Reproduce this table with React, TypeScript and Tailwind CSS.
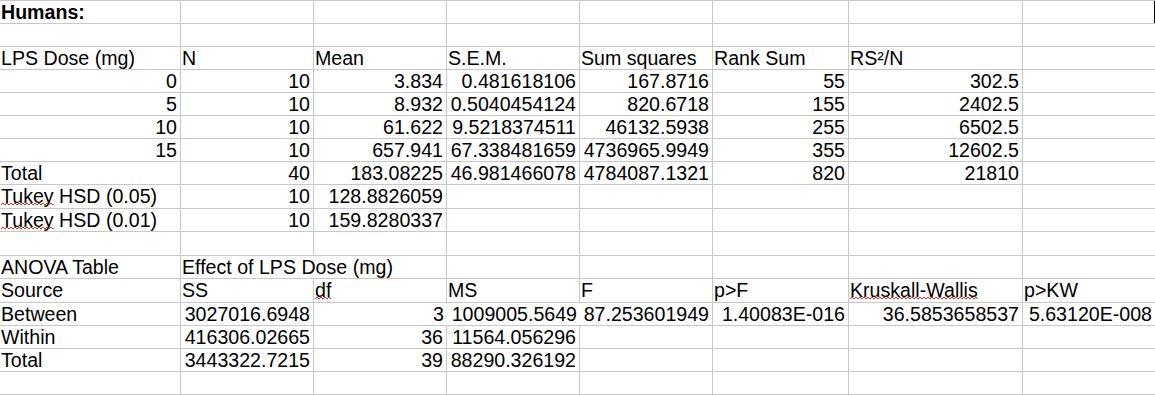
type Cell =
	| string
	| {
			t: string
			bold?: boolean
			squiggle?: boolean
			overflow?: boolean
			noRight?: boolean
	  }

const rows: { h: 23 | 24; cells: Cell[] }[] = [
	{ h: 23, cells: [{ t: 'Humans:', bold: true }, '', '', '', '', '', '', ''] },
	{ h: 23, cells: ['', '', '', '', '', '', '', ''] },
	{
		h: 23,
		cells: ['LPS Dose (mg)', 'N', 'Mean', 'S.E.M.', 'Sum squares', 'Rank Sum', 'RS²/N', ''],
	},
	{ h: 23, cells: ['0', '10', '3.834', '0.481618106', '167.8716', '55', '302.5', ''] },
	{ h: 23, cells: ['5', '10', '8.932', '0.5040454124', '820.6718', '155', '2402.5', ''] },
	{ h: 23, cells: ['10', '10', '61.622', '9.5218374511', '46132.5938', '255', '6502.5', ''] },
	{ h: 23, cells: ['15', '10', '657.941', '67.338481659', '4736965.9949', '355', '12602.5', ''] },
	{
		h: 23,
		cells: ['Total', '40', '183.08225', '46.981466078', '4784087.1321', '820', '21810', ''],
	},
	{ h: 24, cells: [{ t: 'Tukey HSD (0.05)', squiggle: true }, '10', '128.8826059', '', '', '', '', ''] },
	{ h: 23, cells: [{ t: 'Tukey HSD (0.01)', squiggle: true }, '10', '159.8280337', '', '', '', '', ''] },
	{ h: 24, cells: ['', '', '', '', '', '', '', ''] },
	{
		h: 23,
		cells: ['ANOVA Table', { t: 'Effect of LPS Dose (mg)', overflow: true }, '', '', '', '', '', ''],
	},
	{
		h: 24,
		cells: [
			'Source',
			'SS',
			{ t: 'df', squiggle: true },
			'MS',
			'F',
			'p>F',
			{ t: 'Kruskall-Wallis', squiggle: true },
			'p>KW',
		],
	},
	{
		h: 23,
		cells: [
			'Between',
			'3027016.6948',
			{ t: '3', noRight: true },
			{ t: '1009005.5649', noRight: true },
			'87.253601949',
			'1.40083E-016',
			'36.5853658537',
			'5.63120E-008',
		],
	},
	{ h: 23, cells: ['Within', '416306.02665', '36', '11564.056296', '', '', '', ''] },
	{ h: 23, cells: ['Total', '3443322.7215', '39', '88290.326192', '', '', '', ''] },
	{ h: 23, cells: ['', '', '', '', '', '', '', ''] },
	{ h: 23, cells: ['', '', '', '', '', '', '', ''] },
]

const isNumber = (s: string) => /^[-\d.E]+$/.test(s)

// red spell-check squiggle drawn under a word
const Squiggle = ({ children }: { children: string }) => (
	<span className="relative inline-block">
		{children}
		<svg className="absolute left-0 top-[17px] w-full h-[4px]" aria-hidden>
			<defs>
				<pattern id="squiggle" width="4" height="4" patternUnits="userSpaceOnUse">
					<path d="M0 3 L2 1 L4 3" fill="none" stroke="#e0281c" strokeWidth="1" />
				</pattern>
			</defs>
			<rect width="100%" height="4" fill="url(#squiggle)" />
		</svg>
	</span>
)

const renderText = (t: string, squiggle?: boolean) => {
	if (!squiggle) return t
	// only the first word gets the spell-check squiggle
	const [first, ...rest] = t.split(' ')
	return (
		<>
			<Squiggle>{first}</Squiggle>
			{rest.length > 0 && ' ' + rest.join(' ')}
		</>
	)
}

export default function App() {
	return (
		<div
			className="w-[1155px] h-[395px] overflow-hidden bg-white text-black text-[19.6px] leading-[22px] border-t border-[#c8c8c8]"
			style={{ fontFamily: '"Liberation Sans", Arial, sans-serif' }}
		>
			{rows.map((row, r) => (
				<div
					key={r}
					className={`grid grid-cols-[181px_133px_133px_133px_133px_136px_174px_1fr] border-b border-[#c8c8c8] ${
						row.h === 24 ? 'h-[24px]' : 'h-[23px]'
					}`}
				>
					{row.cells.map((cell, c) => {
						const data = typeof cell === 'string' ? { t: cell } : cell
						const last = c === row.cells.length - 1
						const right = isNumber(data.t)
						let border = 'border-r border-[#c8c8c8]'
						if (last) border = r === 0 ? 'border-r border-black' : ''
						if (data.overflow || data.noRight) border = ''
						return (
							<div
								key={c}
								className={`whitespace-nowrap pl-px pr-[3px] ${border} ${
									right ? 'text-right' : 'text-left'
								} ${data.bold ? 'font-bold' : ''} ${
									data.overflow ? 'overflow-visible relative z-10' : 'overflow-hidden'
								}`}
							>
								{renderText(data.t, 'squiggle' in data ? data.squiggle : false)}
							</div>
						)
					})}
				</div>
			))}
		</div>
	)
}
